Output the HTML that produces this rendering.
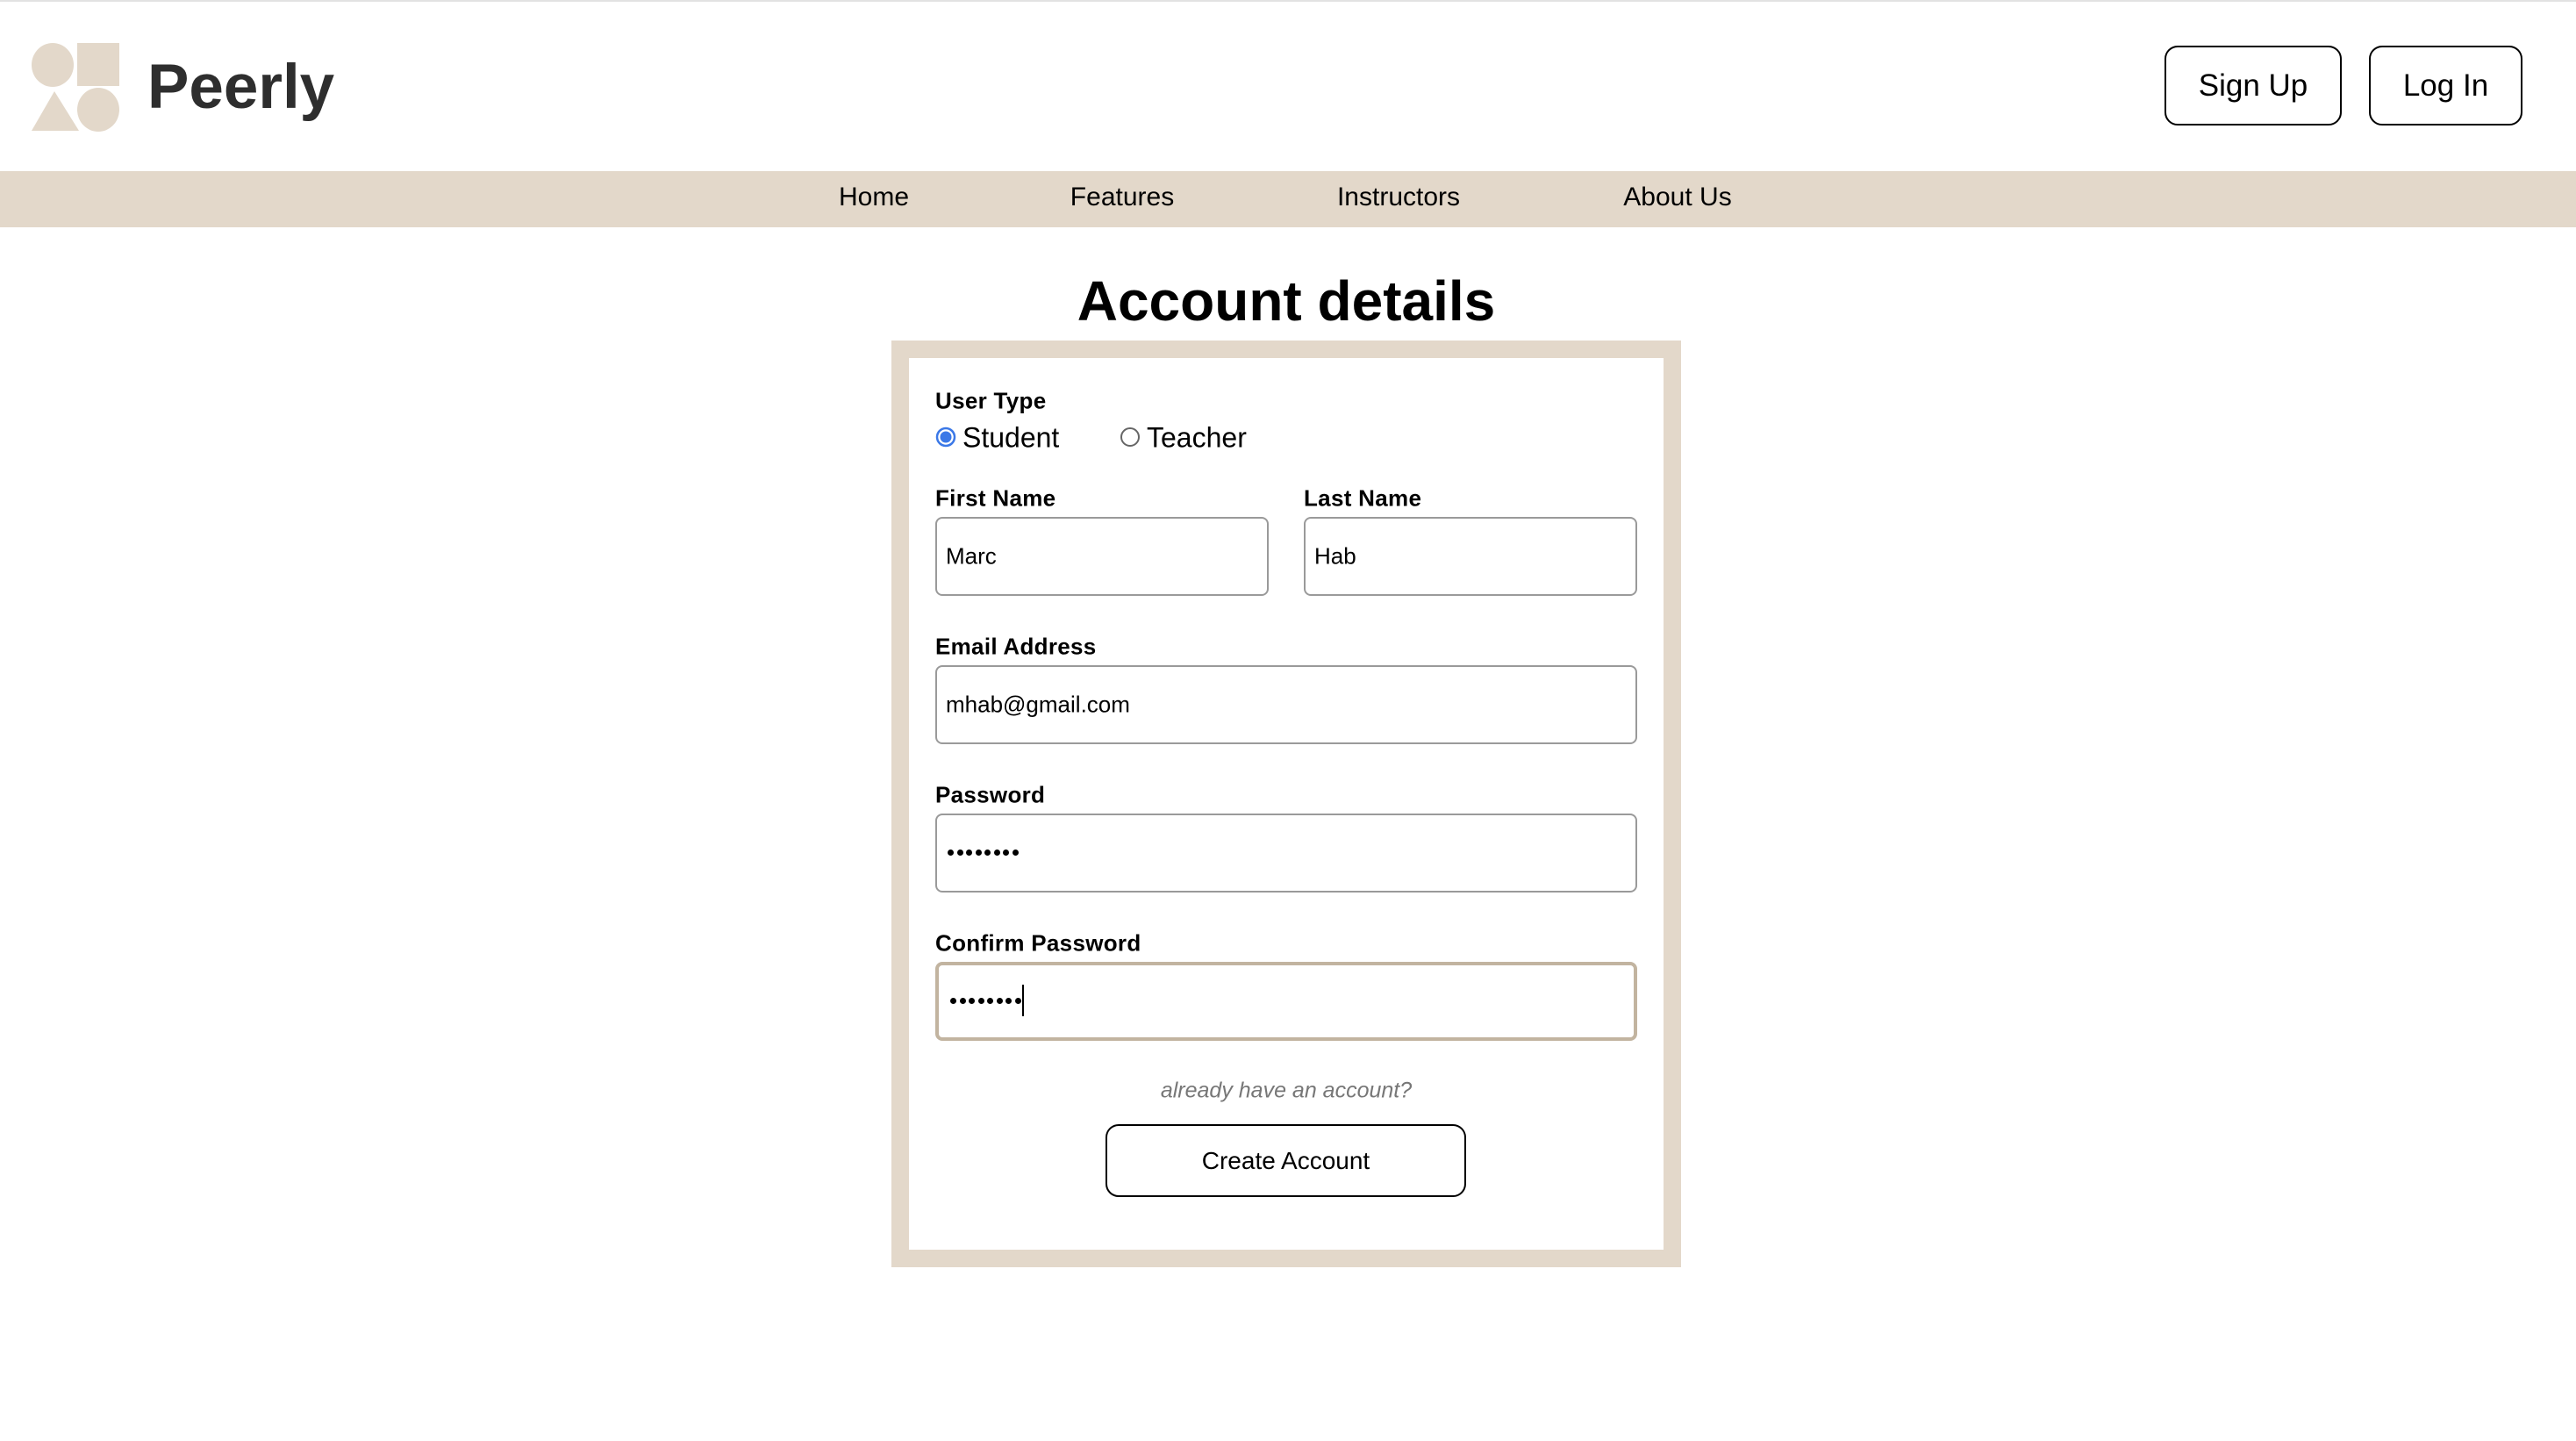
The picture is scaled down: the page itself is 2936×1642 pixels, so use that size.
<!DOCTYPE html>
<html><head><meta charset="utf-8"><style>
*{margin:0;padding:0;box-sizing:border-box}
body{width:2936px;height:1642px;background:#fff;font-family:"Liberation Sans",sans-serif;color:#000;position:relative;overflow:hidden}
.a{position:absolute}
.c{transform:translate(-50%,-50%);white-space:nowrap}
.lbl{position:absolute;font-size:26px;font-weight:bold;transform:translateY(-50%);white-space:nowrap;letter-spacing:0.3px}
.inp{position:absolute;border:2px solid #9a9a9a;border-radius:8px;background:#fff}
.val{position:absolute;font-size:26px;transform:translateY(-50%);white-space:nowrap}
.btn{position:absolute;border:2px solid #000;border-radius:15px;background:#fff;display:flex;align-items:center;justify-content:center;white-space:nowrap}
.nav{position:absolute;top:225px;font-size:30px;transform:translate(-50%,-50%);white-space:nowrap}
.dots{position:absolute;display:flex;gap:3.5px}
.dots i{display:block;width:7px;height:7px;border-radius:50%;background:#000}
</style></head><body>
<div class="a" style="left:0;top:0;width:2936px;height:2px;background:#e2e2e2"></div>
<svg class="a" style="left:0;top:0" width="160" height="160">
<ellipse cx="60" cy="74" rx="24" ry="25" fill="#e3d8ca"/>
<rect x="88" y="49" width="48" height="49" fill="#e3d8ca"/>
<polygon points="62,104 36,149 90,149" fill="#e3d8ca"/>
<ellipse cx="112" cy="125" rx="24" ry="25" fill="#e3d8ca"/>
</svg>
<div class="a" style="left:168px;top:64px;font-size:71px;font-weight:bold;color:#2e2e2e;line-height:1">Peerly</div>
<div class="btn" style="left:2467px;top:52px;width:202px;height:91px;font-size:35px">Sign Up</div>
<div class="btn" style="left:2700px;top:52px;width:175px;height:91px;font-size:35px">Log In</div>
<div class="a" style="left:0;top:195px;width:2936px;height:64px;background:#e3d8ca"></div>
<div class="nav" style="left:996px">Home</div>
<div class="nav" style="left:1279px">Features</div>
<div class="nav" style="left:1594px">Instructors</div>
<div class="nav" style="left:1912px">About Us</div>
<div class="a c" style="left:1466px;top:343px;font-size:64px;font-weight:bold">Account details</div>
<div class="a" style="left:1016px;top:388px;width:900px;height:1056px;border:20px solid #e3d8ca;background:#fff"></div>
<div class="lbl" style="left:1066px;top:457px">User Type</div>
<svg class="a" style="left:1066px;top:486px" width="24" height="24"><circle cx="12" cy="12" r="10" fill="#fff" stroke="#3b78e7" stroke-width="2.5"/><circle cx="12" cy="12" r="6.5" fill="#3b78e7"/></svg>
<div class="val" style="left:1097px;top:499px;font-size:32px">Student</div>
<svg class="a" style="left:1276px;top:486px" width="24" height="24"><circle cx="12" cy="12" r="10" fill="#fff" stroke="#666" stroke-width="2"/></svg>
<div class="val" style="left:1307px;top:499px;font-size:32px">Teacher</div>
<div class="lbl" style="left:1066px;top:568px">First Name</div>
<div class="lbl" style="left:1486px;top:568px">Last Name</div>
<div class="inp" style="left:1066px;top:589px;width:380px;height:90px"></div>
<div class="inp" style="left:1486px;top:589px;width:380px;height:90px"></div>
<div class="val" style="left:1078px;top:634px">Marc</div>
<div class="val" style="left:1498px;top:634px">Hab</div>
<div class="lbl" style="left:1066px;top:737px">Email Address</div>
<div class="inp" style="left:1066px;top:758px;width:800px;height:90px"></div>
<div class="val" style="left:1078px;top:803px">mhab@gmail.com</div>
<div class="lbl" style="left:1066px;top:906px">Password</div>
<div class="inp" style="left:1066px;top:927px;width:800px;height:90px"></div>
<div class="dots" style="left:1080px;top:968px"><i></i><i></i><i></i><i></i><i></i><i></i><i></i><i></i></div>
<div class="lbl" style="left:1066px;top:1075px">Confirm Password</div>
<div class="inp" style="left:1066px;top:1096px;width:800px;height:90px;border:4px solid #c2b4a0"></div>
<div class="dots" style="left:1083px;top:1137px"><i></i><i></i><i></i><i></i><i></i><i></i><i></i><i></i></div>
<div class="a" style="left:1165px;top:1122px;width:2px;height:36px;background:#000"></div>
<div class="a c" style="left:1466px;top:1243px;font-size:25px;font-style:italic;color:#777">already have an account?</div>
<div class="btn" style="left:1260px;top:1281px;width:411px;height:83px;font-size:28px">Create Account</div>
</body></html>
